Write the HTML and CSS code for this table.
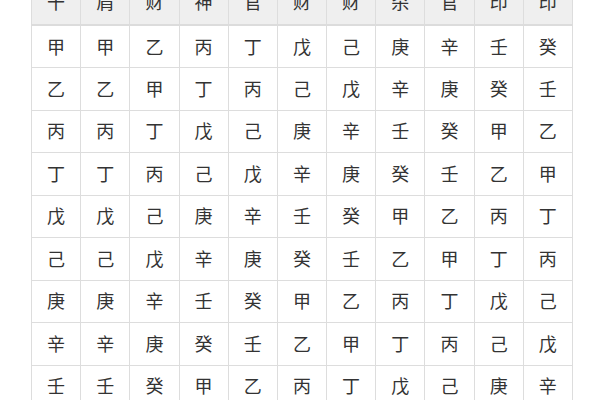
FILE: index.html
```html
<!DOCTYPE html>
<html lang="zh-CN">
<head>
<meta charset="utf-8">
<title>十神表</title>
<link rel="stylesheet" href="styles.css">
</head>
<body>
<div class="wrap">
<table class="gods">
<thead>
<tr>
<th>日<br>干</th><th>比<br>肩</th><th>劫<br>财</th><th>食<br>神</th><th>伤<br>官</th><th>偏<br>财</th><th>正<br>财</th><th>七<br>杀</th><th>正<br>官</th><th>偏<br>印</th><th>正<br>印</th>
</tr>
</thead>
<tbody>
<tr><td>甲</td><td>甲</td><td>乙</td><td>丙</td><td>丁</td><td>戊</td><td>己</td><td>庚</td><td>辛</td><td>壬</td><td>癸</td></tr>
<tr><td>乙</td><td>乙</td><td>甲</td><td>丁</td><td>丙</td><td>己</td><td>戊</td><td>辛</td><td>庚</td><td>癸</td><td>壬</td></tr>
<tr><td>丙</td><td>丙</td><td>丁</td><td>戊</td><td>己</td><td>庚</td><td>辛</td><td>壬</td><td>癸</td><td>甲</td><td>乙</td></tr>
<tr><td>丁</td><td>丁</td><td>丙</td><td>己</td><td>戊</td><td>辛</td><td>庚</td><td>癸</td><td>壬</td><td>乙</td><td>甲</td></tr>
<tr><td>戊</td><td>戊</td><td>己</td><td>庚</td><td>辛</td><td>壬</td><td>癸</td><td>甲</td><td>乙</td><td>丙</td><td>丁</td></tr>
<tr><td>己</td><td>己</td><td>戊</td><td>辛</td><td>庚</td><td>癸</td><td>壬</td><td>乙</td><td>甲</td><td>丁</td><td>丙</td></tr>
<tr><td>庚</td><td>庚</td><td>辛</td><td>壬</td><td>癸</td><td>甲</td><td>乙</td><td>丙</td><td>丁</td><td>戊</td><td>己</td></tr>
<tr><td>辛</td><td>辛</td><td>庚</td><td>癸</td><td>壬</td><td>乙</td><td>甲</td><td>丁</td><td>丙</td><td>己</td><td>戊</td></tr>
<tr><td>壬</td><td>壬</td><td>癸</td><td>甲</td><td>乙</td><td>丙</td><td>丁</td><td>戊</td><td>己</td><td>庚</td><td>辛</td></tr>
<tr><td>癸</td><td>癸</td><td>壬</td><td>乙</td><td>甲</td><td>丁</td><td>丙</td><td>己</td><td>戊</td><td>辛</td><td>庚</td></tr>
</tbody>
</table>
</div>
</body>
</html>
```
FILE: styles.css
```css
html, body {
  margin: 0;
  padding: 0;
  background: #ffffff;
  overflow: hidden;
}
body {
  font-family: "Noto Sans CJK SC", "Noto Sans", sans-serif;
  color: #333333;
}
.wrap {
  margin-top: -45px;
  padding-left: 31px;
}
.gods {
  border-collapse: collapse;
  table-layout: fixed;
  width: 542px;
}
.gods th,
.gods td {
  border: 1px solid #dddddd;
  text-align: center;
  padding: 0;
  font-size: 18px;
  font-weight: normal;
}
.gods th {
  background: #efefef;
  line-height: 22px;
  padding: 12px 0 12px;
  border-bottom: 2px solid #dcdcdc;
}
.gods tbody tr {
  height: 42.5px;
}
.gods td {
  line-height: 20px;
  padding-bottom: 2px;
}
```
